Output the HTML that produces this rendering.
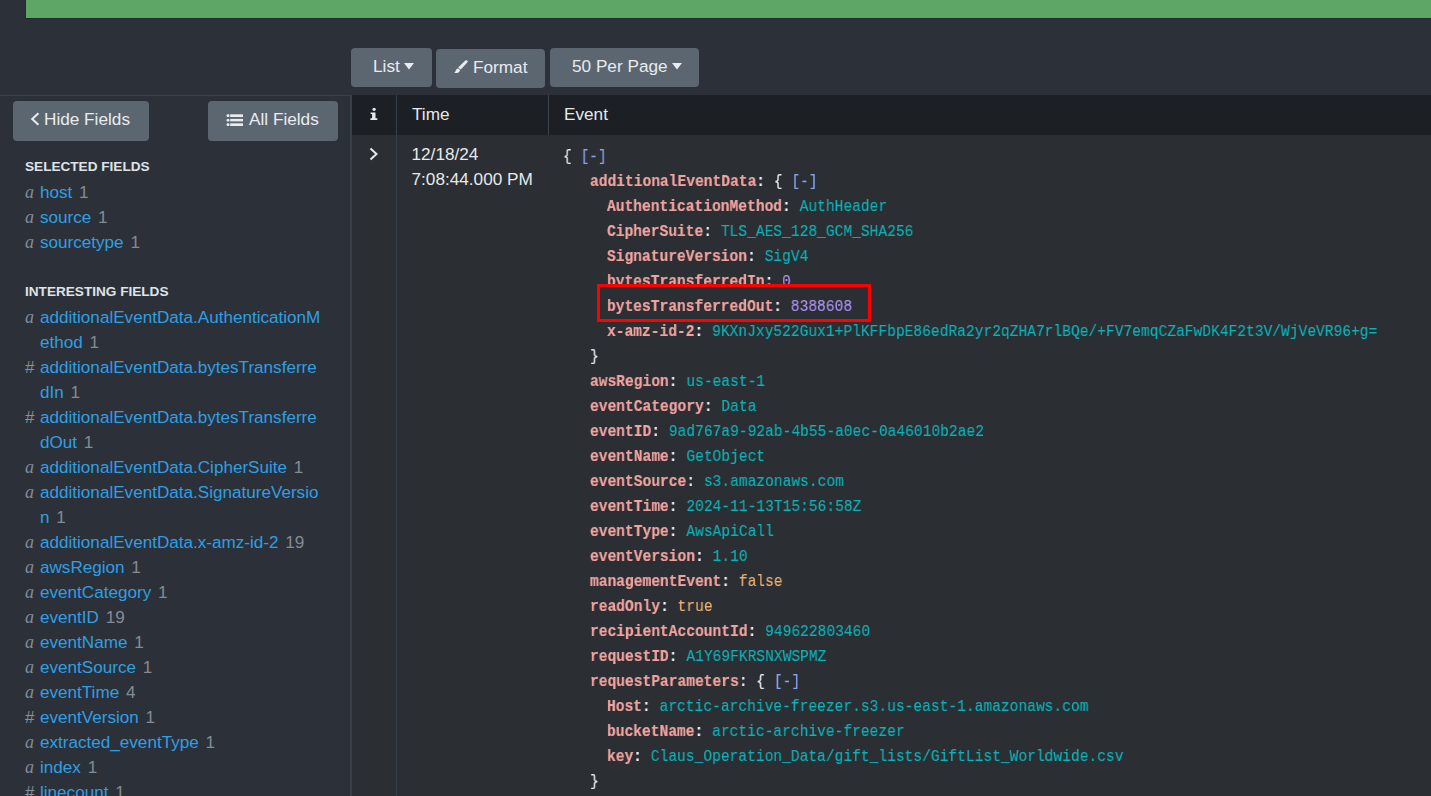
<!DOCTYPE html><html><head><meta charset="utf-8"><style>
html,body{margin:0;padding:0}
body{width:1431px;height:796px;overflow:hidden;position:relative;background:#2c3139;font-family:"Liberation Sans",sans-serif;}
.abs{position:absolute}
.green{left:26px;top:0;width:1405px;height:18px;background:#5ea665;box-shadow:0 0 0 1px #252a30}
.btn{position:absolute;background:#5c6671;border-radius:4px;color:#e9ecef;font-size:17.2px;white-space:pre}
.btn span{position:absolute;white-space:pre}
.sb-hr{left:0;top:95px;width:350px;height:1px;background:#3b4149}
.sb-vr{left:350px;top:95px;width:2px;height:701px;background:#3a4048}
.thead{left:352px;top:95px;width:1079px;height:40px;background:#1c1f23}
.tbody{left:352px;top:135px;width:1079px;height:661px;background:#2b2f33}
.sep1{left:396px;top:95px;width:1px;height:701px;background:#34404a}
.sep2{left:548px;top:95px;width:1px;height:40px;background:#3a4550}
.th{position:absolute;color:#e6e9ec;font-size:17.2px;white-space:pre}
.fh{position:absolute;left:25px;color:#dfe3e7;font-weight:bold;font-size:13.6px;white-space:pre}
.fl{position:absolute;left:40px;color:#2f9fe4;font-size:17.1px;white-space:pre}
.ft{position:absolute;left:25px;color:#858b93;font-family:"Liberation Serif",serif;font-style:italic;font-size:18px}
.fth{position:absolute;left:25px;color:#8a9097;font-size:17px}
.fc{color:#858b93;margin-left:2px}
.jl{position:absolute;white-space:pre;will-change:transform;-webkit-text-stroke:0.15px currentColor;font-family:"Liberation Mono",monospace;transform-origin:0 0;line-height:25px;height:25px}
.k{color:#f2a3a0;font-weight:bold;-webkit-text-stroke:0.2px currentColor}
.p{color:#e8eaec}
.c{color:#eef0f2;font-weight:bold}
.b{color:#88a3f2}
.s{color:#0db2b8}
.n{color:#ad90f2}
.o{color:#ecb072}
.redbox{left:597px;top:284px;width:274px;height:38px;box-sizing:border-box;border:3px solid #fe0000;background:#2b2f33}
</style></head><body>

<div class="abs green"></div>
<div class="btn" style="left:351px;top:48px;width:81px;height:39px"><span style="left:22px;top:8px">List</span><svg class="abs" style="left:53px;top:15px" width="10" height="7" viewBox="0 0 10 7"><path d="M0 0H10L5 6.5Z" fill="#e9ecef"/></svg></div>
<div class="btn" style="left:436px;top:49px;width:109px;height:39px"><svg class="abs" style="left:18px;top:11px" width="14" height="14" viewBox="0 0 14 14"><path d="M11.3 0.6 Q13.0 -0.2 13.6 1.2 Q13.5 2.2 12.8 3.0 L6.8 9.6 L4.2 7.4 Z" fill="#e9ecef"/><path d="M4.1 8.3 L6.0 10.0 Q5.8 12.6 2.8 13.0 Q1.4 13.2 0.3 12.8 Q1.5 12.0 1.7 10.8 Q2.0 8.8 4.1 8.3 Z" fill="#e9ecef"/></svg><span style="left:37px;top:8px">Format</span></div>
<div class="btn" style="left:550px;top:48px;width:149px;height:39px"><span style="left:22px;top:8px">50 Per Page</span><svg class="abs" style="left:122px;top:15px" width="10" height="7" viewBox="0 0 10 7"><path d="M0 0H10L5 6.5Z" fill="#e9ecef"/></svg></div>
<div class="abs sb-hr"></div><div class="abs sb-vr"></div>
<div class="abs thead"></div><div class="abs tbody"></div><div class="abs sep1"></div><div class="abs sep2"></div>
<div class="btn" style="left:13px;top:101px;width:136px;height:40px"><svg class="abs" style="left:17px;top:11px" width="10" height="16" viewBox="0 0 10 16"><path d="M8.4 1.2 L2.2 7 L8.4 12.8" stroke="#e9ecef" stroke-width="2" fill="none"/></svg><span style="left:31px;top:8px">Hide Fields</span></div>
<div class="btn" style="left:208px;top:101px;width:130px;height:40px"><svg class="abs" style="left:18px;top:13px" width="18" height="14" viewBox="0 0 18 14"><rect x="0.5" y="0.3" width="3" height="2.7" rx="1.2" fill="#e9ecef"/><rect x="0.5" y="4.9" width="3" height="2.5" rx="1.2" fill="#e9ecef"/><rect x="0.5" y="9.3" width="3" height="2.7" rx="1.2" fill="#e9ecef"/><rect x="4.2" y="0.3" width="12.8" height="2.7" fill="#e9ecef"/><rect x="4.2" y="4.9" width="12.8" height="2.5" fill="#e9ecef"/><rect x="4.2" y="9.3" width="12.8" height="2.7" fill="#e9ecef"/></svg><span style="left:41px;top:8px">All Fields</span></div>
<svg class="abs" style="left:369px;top:106px" width="10" height="15" viewBox="0 0 10 15"><circle cx="5.1" cy="3.3" r="1.65" fill="#e6e9ec"/><path d="M1.6 6.4 H6.5 V12.3 H8.3 V14.0 H1.4 V12.3 H3.1 V8.0 H1.6 Z" fill="#e6e9ec"/></svg>
<div class="th" style="left:412px;top:104px">Time</div>
<div class="th" style="left:564px;top:104px">Event</div>
<svg class="abs" style="left:369px;top:147px" width="10" height="14" viewBox="0 0 10 14"><path d="M1.5 1.5 L7.5 7 L1.5 12.5" stroke="#e6e9ec" stroke-width="2" fill="none"/></svg>
<div class="th" style="left:411.5px;top:143.5px">12/18/24</div>
<div class="th" style="left:411.5px;top:168.5px">7:08:44.000 PM</div>
<div class="fh" style="top:159px">SELECTED FIELDS</div>
<div class="ft" style="top:182px">a</div>
<div class="fl" style="top:183px">host <span class="fc">1</span></div>
<div class="ft" style="top:207px">a</div>
<div class="fl" style="top:208px">source <span class="fc">1</span></div>
<div class="ft" style="top:232px">a</div>
<div class="fl" style="top:233px">sourcetype <span class="fc">1</span></div>
<div class="fh" style="top:284px">INTERESTING FIELDS</div>
<div class="ft" style="top:307px">a</div>
<div class="fl" style="top:308px">additionalEventData.AuthenticationM</div>
<div class="fl" style="top:333px">ethod <span class="fc">1</span></div>
<div class="fth" style="top:358px">#</div>
<div class="fl" style="top:358px">additionalEventData.bytesTransferre</div>
<div class="fl" style="top:383px">dIn <span class="fc">1</span></div>
<div class="fth" style="top:408px">#</div>
<div class="fl" style="top:408px">additionalEventData.bytesTransferre</div>
<div class="fl" style="top:433px">dOut <span class="fc">1</span></div>
<div class="ft" style="top:457px">a</div>
<div class="fl" style="top:458px">additionalEventData.CipherSuite <span class="fc">1</span></div>
<div class="ft" style="top:482px">a</div>
<div class="fl" style="top:483px">additionalEventData.SignatureVersio</div>
<div class="fl" style="top:508px">n <span class="fc">1</span></div>
<div class="ft" style="top:532px">a</div>
<div class="fl" style="top:533px">additionalEventData.x-amz-id-2 <span class="fc">19</span></div>
<div class="ft" style="top:557px">a</div>
<div class="fl" style="top:558px">awsRegion <span class="fc">1</span></div>
<div class="ft" style="top:582px">a</div>
<div class="fl" style="top:583px">eventCategory <span class="fc">1</span></div>
<div class="ft" style="top:607px">a</div>
<div class="fl" style="top:608px">eventID <span class="fc">19</span></div>
<div class="ft" style="top:632px">a</div>
<div class="fl" style="top:633px">eventName <span class="fc">1</span></div>
<div class="ft" style="top:657px">a</div>
<div class="fl" style="top:658px">eventSource <span class="fc">1</span></div>
<div class="ft" style="top:682px">a</div>
<div class="fl" style="top:683px">eventTime <span class="fc">4</span></div>
<div class="fth" style="top:708px">#</div>
<div class="fl" style="top:708px">eventVersion <span class="fc">1</span></div>
<div class="ft" style="top:732px">a</div>
<div class="fl" style="top:733px">extracted_eventType <span class="fc">1</span></div>
<div class="ft" style="top:757px">a</div>
<div class="fl" style="top:758px">index <span class="fc">1</span></div>
<div class="fth" style="top:783px">#</div>
<div class="fl" style="top:783px">linecount <span class="fc">1</span></div>
<div class="jl" style="left:563.40px;top:144.40px;font-size:17px;transform:scaleX(0.858)"><span class="p">{ </span><span class="b">[-]</span></div>
<div class="jl" style="left:589.68px;top:169.40px;font-size:17px;transform:scaleX(0.858)"><span class="k">additionalEventData</span><span class="c">:</span><span class="p"> { </span><span class="b">[-]</span></div>
<div class="jl" style="left:607.20px;top:194.40px;font-size:17px;transform:scaleX(0.858)"><span class="k">AuthenticationMethod</span><span class="c">:</span><span class="p"> </span><span class="s">AuthHeader</span></div>
<div class="jl" style="left:607.20px;top:219.40px;font-size:17px;transform:scaleX(0.858)"><span class="k">CipherSuite</span><span class="c">:</span><span class="p"> </span><span class="s">TLS_AES_128_GCM_SHA256</span></div>
<div class="jl" style="left:607.20px;top:244.40px;font-size:17px;transform:scaleX(0.858)"><span class="k">SignatureVersion</span><span class="c">:</span><span class="p"> </span><span class="s">SigV4</span></div>
<div class="jl" style="left:607.20px;top:269.40px;font-size:17px;transform:scaleX(0.858)"><span class="k">bytesTransferredIn</span><span class="c">:</span><span class="p"> </span><span class="n">0</span></div>
<div class="abs redbox"></div>
<div class="jl" style="left:607.20px;top:294.40px;font-size:17px;transform:scaleX(0.858)"><span class="k">bytesTransferredOut</span><span class="c">:</span><span class="p"> </span><span class="n">8388608</span></div>
<div class="jl" style="left:607.20px;top:319.40px;font-size:17px;transform:scaleX(0.858)"><span class="k">x-amz-id-2</span><span class="c">:</span><span class="p"> </span><span class="s">9KXnJxy522Gux1+PlKFFbpE86edRa2yr2qZHA7rlBQe/+FV7emqCZaFwDK4F2t3V/WjVeVR96+g=</span></div>
<div class="jl" style="left:589.68px;top:344.40px;font-size:17px;transform:scaleX(0.858)"><span class="p">}</span></div>
<div class="jl" style="left:589.68px;top:369.40px;font-size:17px;transform:scaleX(0.858)"><span class="k">awsRegion</span><span class="c">:</span><span class="p"> </span><span class="s">us-east-1</span></div>
<div class="jl" style="left:589.68px;top:394.40px;font-size:17px;transform:scaleX(0.858)"><span class="k">eventCategory</span><span class="c">:</span><span class="p"> </span><span class="s">Data</span></div>
<div class="jl" style="left:589.68px;top:419.40px;font-size:17px;transform:scaleX(0.858)"><span class="k">eventID</span><span class="c">:</span><span class="p"> </span><span class="s">9ad767a9-92ab-4b55-a0ec-0a46010b2ae2</span></div>
<div class="jl" style="left:589.68px;top:444.40px;font-size:17px;transform:scaleX(0.858)"><span class="k">eventName</span><span class="c">:</span><span class="p"> </span><span class="s">GetObject</span></div>
<div class="jl" style="left:589.68px;top:469.40px;font-size:17px;transform:scaleX(0.858)"><span class="k">eventSource</span><span class="c">:</span><span class="p"> </span><span class="s">s3.amazonaws.com</span></div>
<div class="jl" style="left:589.68px;top:494.40px;font-size:17px;transform:scaleX(0.858)"><span class="k">eventTime</span><span class="c">:</span><span class="p"> </span><span class="s">2024-11-13T15:56:58Z</span></div>
<div class="jl" style="left:589.68px;top:519.40px;font-size:17px;transform:scaleX(0.858)"><span class="k">eventType</span><span class="c">:</span><span class="p"> </span><span class="s">AwsApiCall</span></div>
<div class="jl" style="left:589.68px;top:544.40px;font-size:17px;transform:scaleX(0.858)"><span class="k">eventVersion</span><span class="c">:</span><span class="p"> </span><span class="s">1.10</span></div>
<div class="jl" style="left:589.68px;top:569.40px;font-size:17px;transform:scaleX(0.858)"><span class="k">managementEvent</span><span class="c">:</span><span class="p"> </span><span class="o">false</span></div>
<div class="jl" style="left:589.68px;top:594.40px;font-size:17px;transform:scaleX(0.858)"><span class="k">readOnly</span><span class="c">:</span><span class="p"> </span><span class="o">true</span></div>
<div class="jl" style="left:589.68px;top:619.40px;font-size:17px;transform:scaleX(0.858)"><span class="k">recipientAccountId</span><span class="c">:</span><span class="p"> </span><span class="s">949622803460</span></div>
<div class="jl" style="left:589.68px;top:644.40px;font-size:17px;transform:scaleX(0.858)"><span class="k">requestID</span><span class="c">:</span><span class="p"> </span><span class="s">A1Y69FKRSNXWSPMZ</span></div>
<div class="jl" style="left:589.68px;top:669.40px;font-size:17px;transform:scaleX(0.858)"><span class="k">requestParameters</span><span class="c">:</span><span class="p"> { </span><span class="b">[-]</span></div>
<div class="jl" style="left:607.20px;top:694.40px;font-size:17px;transform:scaleX(0.858)"><span class="k">Host</span><span class="c">:</span><span class="p"> </span><span class="s">arctic-archive-freezer.s3.us-east-1.amazonaws.com</span></div>
<div class="jl" style="left:607.20px;top:719.40px;font-size:17px;transform:scaleX(0.858)"><span class="k">bucketName</span><span class="c">:</span><span class="p"> </span><span class="s">arctic-archive-freezer</span></div>
<div class="jl" style="left:607.20px;top:744.40px;font-size:17px;transform:scaleX(0.858)"><span class="k">key</span><span class="c">:</span><span class="p"> </span><span class="s">Claus_Operation_Data/gift_lists/GiftList_Worldwide.csv</span></div>
<div class="jl" style="left:589.68px;top:769.40px;font-size:17px;transform:scaleX(0.858)"><span class="p">}</span></div>
</body></html>
